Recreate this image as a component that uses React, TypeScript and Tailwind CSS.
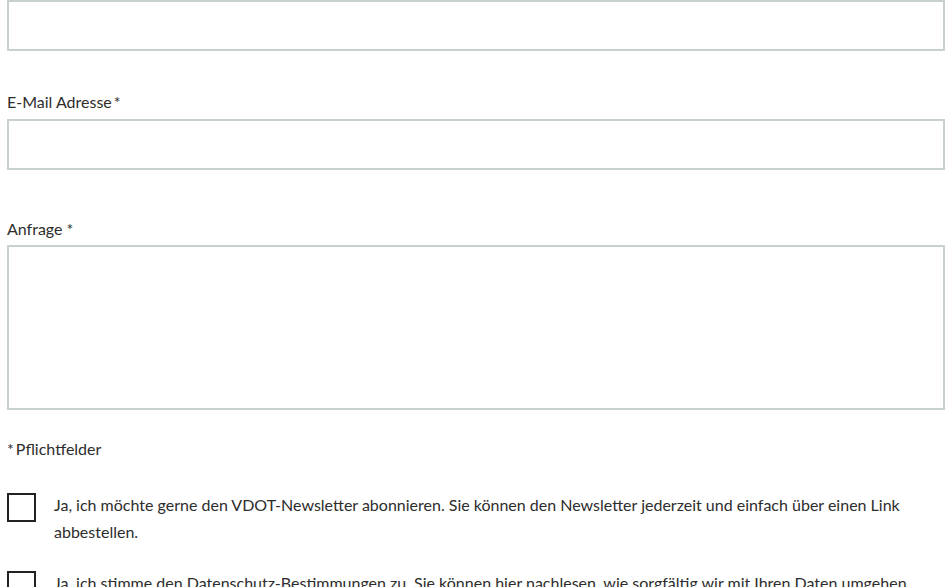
import React from 'react';

const Check: React.FC<{ children: React.ReactNode; className?: string }> = ({ children, className }) => (
  <div className={`flex items-start gap-[18px] ${className ?? ''}`}>
    <span className="mt-[2px] block h-[29px] w-[29px] shrink-0 border-2 border-[#222]" />
    <p className="text-[16px] leading-[27px] text-[#2d2d2d]">{children}</p>
  </div>
);

export default function App() {
  return (
    <div className="min-h-screen overflow-hidden bg-white pl-[7px] pr-[5px]" style={{ fontFamily: 'Lato, "Noto Sans", sans-serif' }}>
      <div className="h-[51px] w-full border-2 border-[#c8d1cf]" />

      <div className="mt-[39px]">
        <label className="block text-[16px] leading-[24px] text-[#2d2d2d]">E-Mail Adresse{'\u2009'}*</label>
        <div className="mt-[5px] h-[51px] w-full border-2 border-[#c8d1cf]" />
      </div>

      <div className="mt-[47px]">
        <label className="block text-[16px] leading-[24px] text-[#2d2d2d]">Anfrage *</label>
        <div className="mt-[4px] h-[165px] w-full border-2 border-[#c8d1cf]" />
      </div>

      <p className="mt-[27px] text-[16px] leading-[24px] text-[#2d2d2d]">*{'\u2009'}Pflichtfelder</p>

      <Check className="mt-[30px]">
        Ja, ich möchte gerne den VDOT-Newsletter abonnieren. Sie können den Newsletter jederzeit und einfach über einen Link abbestellen.
      </Check>

      <Check className="mt-[24px]">
        Ja, ich stimme den Datenschutz-Bestimmungen zu. Sie können hier nachlesen, wie sorgfältig wir mit Ihren Daten umgehen.
      </Check>
    </div>
  );
}
